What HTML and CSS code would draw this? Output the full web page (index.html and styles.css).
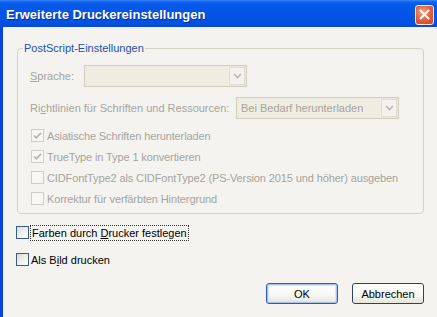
FILE: index.html
```html
<!DOCTYPE html>
<html lang="de">
<head>
<meta charset="utf-8">
<link rel="stylesheet" href="styles.css">
</head>
<body>
<div class="window">
  <div class="titlebar">
    <span class="title">Erweiterte Druckereinstellungen</span>
    <span class="close">
      <svg width="11" height="11" viewBox="0 0 11 11"><path d="M1.5 1.5 L9.5 9.5 M9.5 1.5 L1.5 9.5" stroke="#fff" stroke-width="2" stroke-linecap="round"/></svg>
    </span>
  </div>
  <div class="client">
    <fieldset class="group">
      <legend class="group-title">PostScript-Einstellungen</legend>
      <div class="field-row lang-row">
        <span class="label lang-label"><u>S</u>prache:</span>
        <span class="select">
          <span class="select-text"></span>
          <span class="drop"><svg width="11" height="8" viewBox="0 0 11 8"><path d="M2 2 L5.5 5.5 L9 2" fill="none" stroke="#b9b9b2" stroke-width="1.6"/></svg></span>
        </span>
      </div>
      <div class="field-row policy-row">
        <span class="label policy-label">Ri<u>c</u>htlinien für Schriften und Ressourcen:</span>
        <span class="select">
          <span class="select-text">Bei Bedarf herunterladen</span>
          <span class="drop"><svg width="11" height="8" viewBox="0 0 11 8"><path d="M2 2 L5.5 5.5 L9 2" fill="none" stroke="#b9b9b2" stroke-width="1.6"/></svg></span>
        </span>
      </div>
      <div class="checks">
        <div class="check-row disabled">
          <span class="box"><svg width="11" height="11" viewBox="0 0 11 11"><path d="M2 5.5 L4.3 7.8 L9 2.8" fill="none" stroke="#b3b3ab" stroke-width="1.7"/></svg></span>
          <span class="label">Asiatische Schriften herunterladen</span>
        </div>
        <div class="check-row disabled">
          <span class="box"><svg width="11" height="11" viewBox="0 0 11 11"><path d="M2 5.5 L4.3 7.8 L9 2.8" fill="none" stroke="#b3b3ab" stroke-width="1.7"/></svg></span>
          <span class="label">TrueType in Type 1 konvertieren</span>
        </div>
        <div class="check-row disabled">
          <span class="box"></span>
          <span class="label">CIDFontType2 als CIDFontType2 (PS-Version 2015 und höher) ausgeben</span>
        </div>
        <div class="check-row disabled">
          <span class="box"></span>
          <span class="label">Korrektur für verfärbten Hintergrund</span>
        </div>
      </div>
    </fieldset>
    <div class="options">
      <div class="check-row active">
        <span class="box"></span>
        <span class="label focus">Farben durch <u>D</u>rucker festlegen</span>
      </div>
      <div class="check-row active">
        <span class="box"></span>
        <span class="label">Als B<u>i</u>ld drucken</span>
      </div>
    </div>
    <div class="buttons">
      <span class="btn default">OK</span>
      <span class="btn">Abbrechen</span>
    </div>
  </div>
</div>
</body>
</html>
```

FILE: styles.css
```css
html, body {
  margin: 0;
  padding: 0;
}
body {
  width: 437px;
  height: 317px;
  overflow: hidden;
  background: #f4f3ef;
  font-family: "Liberation Sans", Arial, sans-serif;
  font-size: 11px;
}
.window {
  display: flex;
  flex-direction: column;
  width: 437px;
  height: 317px;
}
.titlebar {
  height: 27px;
  flex: none;
  display: flex;
  align-items: center;
  justify-content: space-between;
  padding: 0 3px 0 6px;
  box-sizing: border-box;
  background: linear-gradient(#3a86f5 0px, #0f62ee 2px, #0659ea 5px, #0454e6 14px, #0352e4 22px, #0a4ad8 27px);
}
.title {
  color: #fff;
  font-family: "Liberation Sans", Arial, sans-serif;
  font-weight: bold;
  font-size: 13px;
  text-shadow: 1px 1px 0 #0a2d8c;
  margin-top: 1px;
}
.close {
  width: 19px;
  height: 20px;
  box-sizing: border-box;
  border: 1px solid #f6e6e0;
  border-radius: 3px;
  background: radial-gradient(circle at 40% 35%, #f2a58a 0%, #e4603c 50%, #cc4520 100%);
  display: flex;
  align-items: center;
  justify-content: center;
  margin-top: 2px;
}
.client {
  flex: 1;
  border-left: 3px solid #0b44d8;
  display: flex;
  flex-direction: column;
  background: #f4f3ef;
}
.group {
  margin: 15px 13px 0 14px;
  padding: 0 12px 4px 12px;
  border: 1px solid #d3d2c6;
  border-radius: 4px;
  min-width: 0;
}
.group-title {
  color: #2451a8;
  padding: 0 1px;
  margin-left: -7px;
  line-height: 13px;
}
.label {
  color: #a4a4a0;
  white-space: nowrap;
}
.field-row {
  display: flex;
  align-items: center;
}
.lang-row {
  margin-top: 10px;
}
.lang-label {
  width: 54px;
}
.policy-row {
  margin-top: 10px;
}
.policy-label {
  width: 206px;
}
.select {
  width: 163px;
  height: 22px;
  box-sizing: border-box;
  border: 1px solid #cfccbf;
  background: #efece1;
  display: flex;
  align-items: center;
  justify-content: space-between;
  padding: 1px;
}
.select-text {
  color: #a6a49c;
  padding-left: 3px;
  white-space: nowrap;
}
.drop {
  width: 16px;
  height: 18px;
  box-sizing: border-box;
  border: 1px solid #dcdad2;
  background: #f3f2ee;
  display: flex;
  align-items: center;
  justify-content: center;
}
.checks {
  margin-top: 6px;
  display: flex;
  flex-direction: column;
}
.checks .label {
  letter-spacing: -0.12px;
}
.check-row {
  height: 21px;
  display: flex;
  align-items: center;
  gap: 3px;
}
.box {
  width: 13px;
  height: 13px;
  box-sizing: border-box;
  display: flex;
  align-items: center;
  justify-content: center;
  flex: none;
}
.disabled .box {
  margin-left: 1px;
  border: 1px solid #cfcec6;
  background: #f7f7f4;
}
.options {
  padding-left: 13px;
  margin-top: 8px;
  display: flex;
  flex-direction: column;
  gap: 6px;
}
.active .box {
  border: 1px solid #3b5a85;
  background: linear-gradient(135deg, #dcdcd6 0%, #f2f2ef 60%, #ffffff 100%);
}
.active .label {
  color: #000;
}
.active {
  gap: 2px;
}
.focus {
  outline: 1px dotted #333;
  outline-offset: 0;
  padding: 1px 1px;
}
.buttons {
  display: flex;
  justify-content: flex-end;
  gap: 14px;
  padding-right: 13px;
  margin-top: 13px;
}
.btn {
  width: 72px;
  height: 21px;
  box-sizing: border-box;
  border: 1px solid #2d4266;
  border-radius: 3px;
  background: linear-gradient(#ffffff 0%, #f6f6f2 60%, #e6e5dc 100%);
  display: flex;
  align-items: center;
  justify-content: center;
  color: #000;
}
.btn.default {
  border-color: #3659a6;
  box-shadow: inset 0 0 0 1px #a9c2f0, inset 0 0 0 2px #d6e2f8;
}
```
